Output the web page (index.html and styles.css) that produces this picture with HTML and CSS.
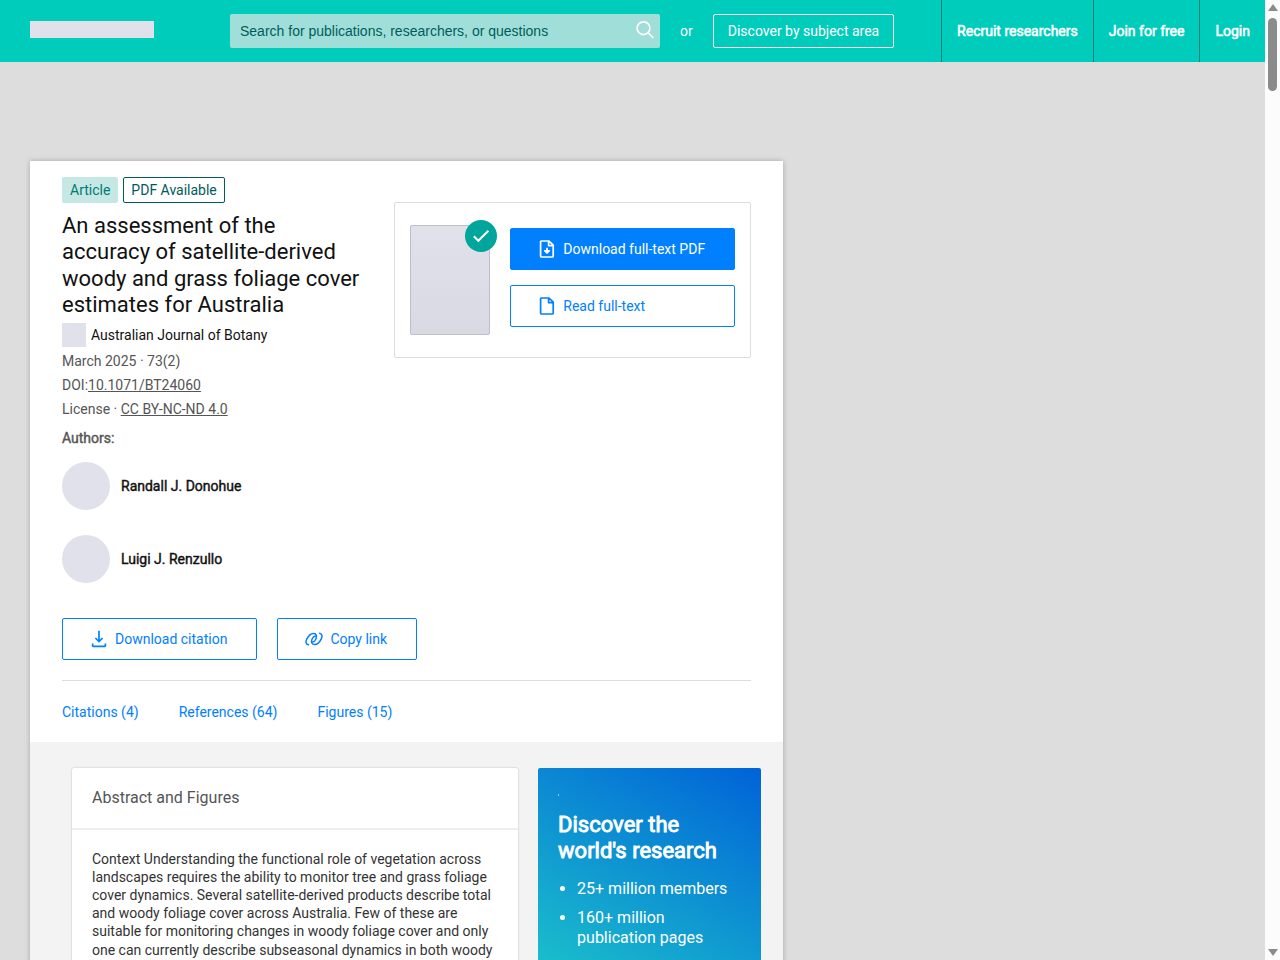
FILE: index.html
```
<!DOCTYPE html>
<html lang="en">
<head>
<meta charset="utf-8">
<title>An assessment of the accuracy of satellite-derived woody and grass foliage cover estimates for Australia</title>
<link rel="stylesheet" href="styles.css">
</head>

<body>
<div class="viewport">
<div class="page">

<!--Header-->
<header class="header">
  <a class="logo" href="#" aria-label="Home"></a>
  <form class="search">
    <input class="search-input" type="search" aria-label="Search" placeholder="Search for publications, researchers, or questions">
    <button class="search-button" type="button" aria-label="Search">
      <svg width="20" height="20" viewBox="0 0 20 20" fill="none" stroke="#fff" stroke-width="1.7">
        <circle cx="8.5" cy="8.2" r="6.4"/>
        <path d="M13.2 12.9L18.4 18"/>
      </svg>
    </button>
  </form>
  <span class="or">or</span>
  <a class="discover-link" href="#">Discover by subject area</a>
  <nav class="header-nav">
    <a href="#">Recruit researchers</a>
    <a href="#">Join for free</a>
    <a href="#">Login</a>
  </nav>
</header>

<div class="layout">
<main class="publication">

  <!--Publication details-->
  <section class="details">
    <div class="details-top">
      <div class="info">
        <div class="badges">
          <span class="badge badge-filled">Article</span>
          <span class="badge badge-outline">PDF Available</span>
        </div>
        <h1 class="title">An assessment of the accuracy of satellite-derived woody and grass foliage cover estimates for Australia</h1>
        <div class="journal"><span class="journal-image"></span><a href="#">Australian Journal of Botany</a></div>
        <ul class="meta">
          <li>March 2025 · 73(2)</li>
          <li>DOI:<a href="#">10.1071/BT24060</a></li>
          <li>License · <a href="#">CC BY-NC-ND 4.0</a></li>
        </ul>
      </div>

      <div class="fulltext">
        <div class="preview">
          <span class="preview-check">
            <svg width="32" height="32" viewBox="0 0 32 32" fill="none" stroke="#fff" stroke-width="2">
              <path d="M8.8 16.2L13.3 20.8L23.4 10.7"/>
            </svg>
          </span>
        </div>
        <div class="fulltext-buttons">
          <button class="button button-primary" type="button">
            <svg class="icon" width="20" height="20" viewBox="0 0 20 20" fill="none" stroke="currentColor" stroke-width="1.7" stroke-linejoin="round">
              <path d="M4.4 2H12L16.2 6.2V17Q16.2 18 15.2 18H4.6Q3.6 18 3.6 17V3Q3.6 2 4.4 2M11.6 2V6.6H16.2"/>
              <path d="M10 8.8V14M7.8 11.8L10 14L12.2 11.8Z"/>
            </svg>
            Download full-text PDF
          </button>
          <button class="button" type="button">
            <svg class="icon" width="20" height="20" viewBox="0 0 20 20" fill="none" stroke="currentColor" stroke-width="1.7" stroke-linejoin="round">
              <path d="M4.4 2H12L16.2 6.2V17Q16.2 18 15.2 18H4.6Q3.6 18 3.6 17V3Q3.6 2 4.4 2M11.6 2V6.6H16.2"/>
            </svg>
            Read full-text
          </button>
        </div>
      </div>
    </div>

    <!--Authors-->
    <h2 class="authors-label">Authors:</h2>
    <ul class="authors">
      <li><span class="avatar"></span><a href="#">Randall J. Donohue</a></li>
      <li><span class="avatar"></span><a href="#">Luigi J. Renzullo</a></li>
    </ul>

    <div class="actions">
      <button class="button" type="button">
        <svg class="icon" width="20" height="20" viewBox="0 0 20 20" fill="none" stroke="currentColor" stroke-width="1.7">
          <path d="M10 1.8V12.4M6.4 9L10 12.6L13.6 9"/>
          <path d="M3.6 14.6V16.4Q3.6 17.4 4.6 17.4H15.4Q16.4 17.4 16.4 16.4V14.6"/>
        </svg>
        Download citation
      </button>
      <button class="button" type="button">
        <svg class="icon" width="20" height="20" viewBox="0 0 20 20" fill="none" stroke="currentColor" stroke-width="1.5" stroke-linecap="round">
          <path d="M4.4 15.8C1.8 15.2 1.4 12.8 2.6 10.4C4 7.4 6.6 4.4 9.6 4.4C12.8 4.4 13 7.6 11.8 10.2C11 12 9.8 12.8 8.6 12.9"/>
          <path d="M15.6 4.2C18.2 4.8 18.6 7.2 17.4 9.6C16 12.6 13.4 15.6 10.4 15.6C7.2 15.6 7 12.4 8.2 9.8C9 8 10.2 7.2 11.4 7.1"/>
        </svg>
        Copy link
      </button>
    </div>

    <nav class="tabs">
      <a href="#">Citations (4)</a>
      <a href="#">References (64)</a>
      <a href="#">Figures (15)</a>
    </nav>
  </section>

  <!--Abstract and sign up-->
  <div class="content">
    <section class="abstract">
      <h2 class="abstract-header">Abstract and Figures</h2>
      <p class="abstract-text">Context Understanding the functional role of vegetation across landscapes requires the ability to monitor tree and grass foliage cover dynamics. Several satellite-derived products describe total and woody foliage cover across Australia. Few of these are suitable for monitoring changes in woody foliage cover and only one can currently describe subseasonal dynamics in both woody</p>
    </section>

    <aside class="promo">
      <span class="promo-mark"></span>
      <h2 class="promo-title">Discover the world's research</h2>
      <ul class="promo-list">
        <li>25+ million members</li>
        <li>160+ million publication pages</li>
      </ul>
    </aside>
  </div>

</main>
</div>
</div>

<!--Scrollbar-->
<div class="scrollbar">
  <span class="arrow-up"></span>
  <span class="thumb"></span>
  <span class="arrow-down"></span>
</div>
</div>
</body>
</html>
```
FILE: styles.css
```
* {
  box-sizing: border-box;
}

body {
  margin: 0;
  font-family: Roboto, "Liberation Sans", sans-serif;
  font-size: 14px;
  line-height: 1.3;
  color: #111;
  background-color: #ddd;
}

ul, h1, h2, p {
  margin: 0;
  padding: 0;
  font-weight: normal;
}

ul {
  list-style-type: none;
}

a {
  color: inherit;
  text-decoration: none;
}

.viewport {
  display: flex;
  height: 100vh;
  overflow: hidden;
}

.page {
  flex: 1;
  min-width: 0;
}

/* Header */
.header {
  display: flex;
  align-items: center;
  height: 62px;
  padding-left: 30px;
  color: white;
  background-color: #00ccbb;
}

.logo {
  width: 124px;
  height: 17px;
  margin: 0 76px 3px 0;
  background-color: #e1e1eb;
}

.search {
  display: flex;
  flex: 0 1 430px;
  height: 34px;
  border-radius: 2px;
  background-color: #a0dfd9;
}

.search-input {
  flex: 1;
  min-width: 0;
  padding: 0 10px;
  border: none;
  background: none;
  font-family: "Liberation Sans", Arial, sans-serif;
  font-size: 14px;
  color: #005c5b;
}

.search-input::placeholder {
  color: #005c5b;
}

.search-button {
  width: 30px;
  padding: 4px 5px 6px;
  border: none;
  background: none;
  line-height: 0;
}

.or {
  margin: 0 20px;
}

.discover-link {
  padding: 7px 14px;
  border: 1px solid white;
  border-radius: 2px;
  white-space: nowrap;
}

.header-nav {
  display: flex;
  height: 100%;
  margin-left: auto;
}

.header-nav a {
  display: flex;
  align-items: center;
  padding: 0 15px;
  border-left: 1px solid #008079;
  -webkit-text-stroke: 0.04em;
  white-space: nowrap;
}

/* Publication */
.layout {
  display: grid;
  grid-template-columns: 5fr 3fr;
  padding: 99px 30px 0;
}

.publication {
  background-color: #f3f3f3;
  box-shadow: 0 0 5px rgba(0, 0, 0, 0.25);
}

.details {
  padding: 16px 32px 21px;
  background-color: white;
}

.details-top {
  display: flex;
  align-items: flex-start;
  justify-content: space-between;
  gap: 30px;
}

.info {
  flex: 1;
}

.badges {
  display: flex;
  gap: 5px;
}

.badge {
  height: 26px;
  padding: 3px 7px;
  border: 1px solid #c5e8e5;
  border-radius: 2px;
}

.badge-filled {
  color: #007a75;
  background-color: #c5e8e5;
}

.badge-outline {
  color: #005c5b;
  border-color: #005c5b;
}

.title {
  margin-top: 10px;
  font-size: 22px;
  line-height: 1.2;
}

.journal {
  display: flex;
  align-items: center;
  gap: 5px;
  margin-top: 3px;
  line-height: 26px;
}

.journal-image {
  width: 24px;
  height: 24px;
  background-color: #e1e1eb;
}

.meta {
  margin-top: 1px;
  line-height: 24px;
  color: #555;
}

.meta a {
  text-decoration: underline;
}

/* Full-text box */
.fulltext {
  display: flex;
  flex: 0 0 356px;
  gap: 20px;
  margin-top: 25px;
  padding: 22px 15px;
  border: 1px solid #ddd;
  border-radius: 2px;
}

.preview {
  position: relative;
  width: 80px;
  height: 110px;
  border: 1px solid #bebec8;
  border-radius: 2px;
  background: linear-gradient(#e1e1eb, #d9d9e3);
}

.preview-check {
  position: absolute;
  top: -6px;
  right: -8px;
  height: 32px;
  border-radius: 50%;
  background-color: #00a59b;
}

.fulltext-buttons {
  display: flex;
  flex: 1;
  flex-direction: column;
  gap: 15px;
  padding-top: 3px;
}

.button {
  display: flex;
  align-items: center;
  gap: 6px;
  height: 42px;
  padding: 0 29px 0 26px;
  border: 1px solid #0080ff;
  border-radius: 2px;
  background-color: white;
  font-family: inherit;
  font-size: 14px;
  color: #0080ff;
  white-space: nowrap;
}

.button-primary {
  color: white;
  background-color: #0080ff;
}

/* Authors */
.authors-label {
  margin-top: 8px;
  font-size: 14px;
  color: #555;
  -webkit-text-stroke: 0.03em;
}

.authors {
  display: grid;
  gap: 25px;
  margin-top: 15px;
}

.authors li {
  display: flex;
  align-items: center;
  gap: 11px;
  -webkit-text-stroke: 0.03em;
}

.avatar {
  width: 48px;
  height: 48px;
  border-radius: 50%;
  background-color: #e1e1eb;
}

.actions {
  display: flex;
  gap: 20px;
  padding: 35px 0 20px;
  border-bottom: 1px solid #ddd;
}

.tabs {
  display: flex;
  gap: 40px;
  padding-top: 22px;
  color: #0080ff;
}

/* Content */
.content {
  display: grid;
  grid-template-columns: 2fr 1fr;
  gap: 20px;
  padding: 26px 22px 0 42px;
}

.abstract {
  height: 400px;
  border-radius: 2px;
  background-color: white;
  box-shadow: 0 0 2px rgba(0, 0, 0, 0.25);
}

.abstract-header {
  padding: 20px 20px 19px;
  border-bottom: 2px solid #eee;
  font-size: 16px;
  color: #555;
}

.abstract-text {
  padding: 20px;
  color: #333;
}

.promo {
  padding: 26px 20px 0;
  border-radius: 2px;
  color: white;
  background: linear-gradient(210deg, #0063d8 0%, #1abccc 60%, #40ccbb 100%);
}

.promo-mark {
  display: block;
  width: 1px;
  height: 2px;
  background-color: #8cc5e8;
}

.promo-title {
  margin-top: 16px;
  font-size: 22px;
  line-height: 1.2;
  -webkit-text-stroke: 0.04em;
}

.promo-list {
  margin-top: 14px;
  padding-left: 19px;
  list-style-type: disc;
  font-size: 16px;
}

.promo-list li {
  margin-bottom: 8px;
}

/* Scrollbar */
.scrollbar {
  display: flex;
  flex-direction: column;
  align-items: center;
  flex: 0 0 15px;
  padding: 4px 0;
  background-color: #fcfcfc;
}

.arrow-up, .arrow-down {
  border: 5px solid transparent;
}

.arrow-up {
  border-top: none;
  border-bottom: 7px solid #8b8b8b;
}

.arrow-down {
  margin-top: auto;
  border-bottom: none;
  border-top: 7px solid #8b8b8b;
}

.thumb {
  width: 9px;
  height: 73px;
  margin-top: 7px;
  border-radius: 5px;
  background-color: #8b8b8b;
}
```
